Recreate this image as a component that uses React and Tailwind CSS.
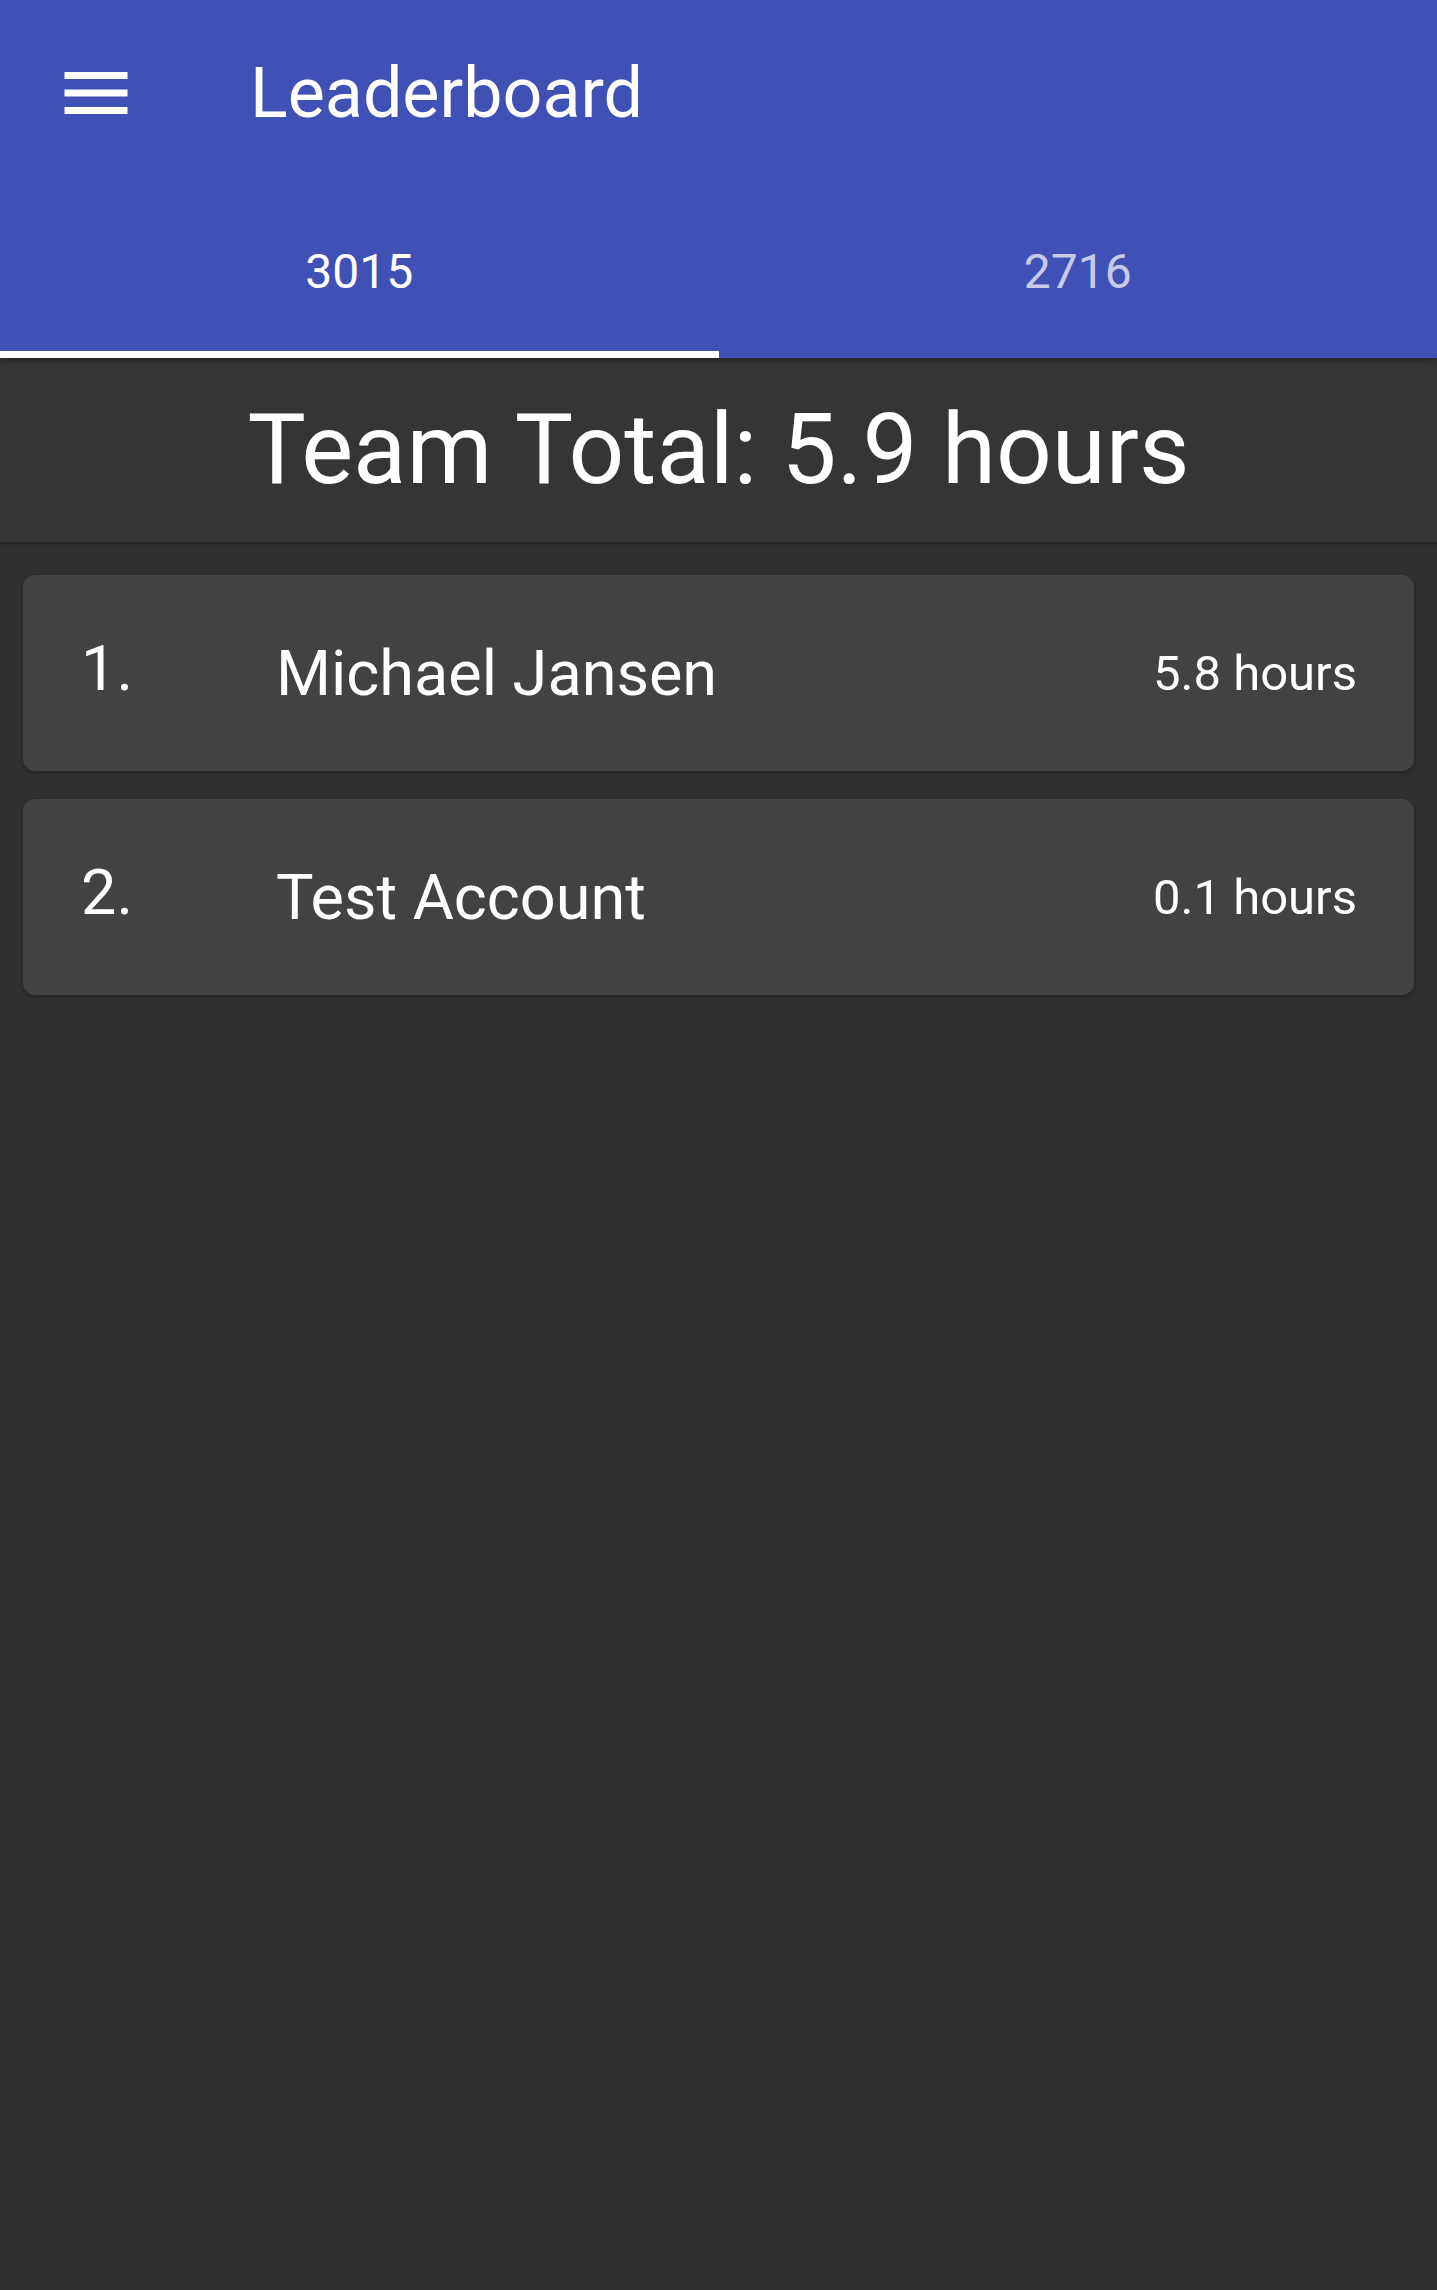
import React from "react";

const rows = [
  { rank: "1.", name: "Michael Jansen", hours: "5.8 hours" },
  { rank: "2.", name: "Test Account", hours: "0.1 hours" },
];

export default function App() {
  return (
    <div
      className="min-h-[2290px] w-full bg-[#303030] text-white"
      style={{ fontFamily: "Roboto, 'Noto Sans', sans-serif" }}
    >
      <header className="relative z-10 bg-[#3f51b5] shadow-[0_3px_6px_rgba(0,0,0,0.35)]">
        <div className="flex h-[186px] items-center">
          <div className="ml-[54px] flex h-[84px] w-[84px] items-center justify-center">
            <svg width="84" height="84" viewBox="0 0 24 24" fill="#ffffff">
              <path d="M3 18h18v-2H3v2zm0-5h18v-2H3v2zm0-7v2h18V6H3z" />
            </svg>
          </div>
          <h1 className="ml-[112px] text-[70px] font-normal leading-none">
            Leaderboard
          </h1>
        </div>
        <div className="flex h-[172px]">
          <div className="relative flex flex-1 items-center justify-center">
            <span className="text-[48px] leading-none text-white">3015</span>
            <div className="absolute bottom-0 left-0 right-0 h-[7px] bg-white" />
          </div>
          <div className="flex flex-1 items-center justify-center">
            <span className="text-[48px] leading-none text-[#c5cbe9]">2716</span>
          </div>
        </div>
      </header>

      <section className="relative flex h-[184px] items-center justify-center bg-[#353535] shadow-[0_2px_4px_rgba(0,0,0,0.3)]">
        <h2 className="text-[98px] font-normal leading-none">Team Total: 5.9 hours</h2>
      </section>

      <div className="flex flex-col gap-[28px] px-[23px] pt-[33px]">
        {rows.map((r) => (
          <div
            key={r.rank}
            className="flex h-[196px] items-center rounded-[12px] bg-[#424242] pl-[58px] pr-[57px] shadow-[0_2px_4px_rgba(0,0,0,0.3)]"
          >
            <span className="-mt-[10px] w-[195px] text-[63px] leading-none">{r.rank}</span>
            <span className="flex-1 text-[63px] leading-none">{r.name}</span>
            <span className="text-[49px] leading-none">{r.hours}</span>
          </div>
        ))}
      </div>
    </div>
  );
}
